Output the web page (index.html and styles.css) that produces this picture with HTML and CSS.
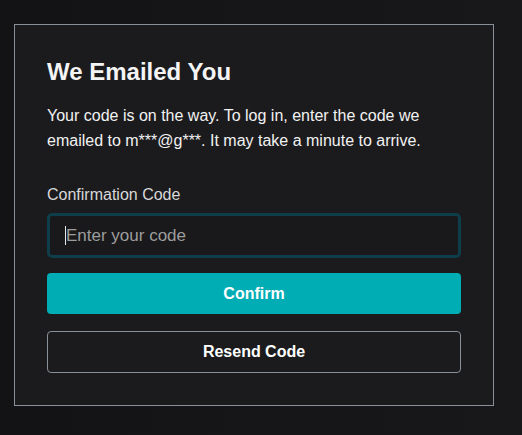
FILE: index.html
```html
<!DOCTYPE html>
<html lang="en">
<head>
<meta charset="utf-8">
<title>We Emailed You</title>
<link rel="stylesheet" href="styles.css">
</head>
<body>
<main class="page">
  <section class="card">
    <h1 class="title">We Emailed You</h1>
    <p class="desc">Your code is on the way. To log in, enter the code we emailed to m***@g***. It may take a minute to arrive.</p>
    <form class="form">
      <label class="label" for="code">Confirmation Code</label>
      <div class="input"><span class="caret"></span><span class="placeholder">Enter your code</span></div>
      <button type="button" class="btn btn-primary">Confirm</button>
      <button type="button" class="btn btn-secondary">Resend Code</button>
    </form>
  </section>
</main>
</body>
</html>
```
FILE: styles.css
```css
html, body {
  margin: 0;
  padding: 0;
}
body {
  background: linear-gradient(90deg, #131315 0%, #18181b 100%);
  font-family: "Liberation Sans", Arial, sans-serif;
  color: #f2f2f2;
  width: 522px;
  height: 435px;
  overflow: hidden;
}
.page {
  padding: 24px 0 0 14px;
}
.card {
  box-sizing: border-box;
  width: 480px;
  height: 382px;
  border: 1px solid #8a9099;
  background: #1b1b1e;
  padding: 32px 32px;
}
.title {
  margin: 0;
  font-size: 24px;
  font-weight: bold;
  line-height: 28px;
  color: #f4f4f4;
  padding-top: 1px;
}
.desc {
  margin: 17px 0 0;
  font-size: 16px;
  line-height: 25px;
  color: #f2f2f2;
}
.form {
  display: flex;
  flex-direction: column;
  margin-top: 30px;
}
.label {
  font-size: 16px;
  line-height: 24px;
  color: #d8d8d8;
}
.input {
  box-sizing: border-box;
  margin-top: 6px;
  height: 45px;
  border: 3px solid #0d3e49;
  border-radius: 5px;
  background: #19191b;
  display: flex;
  align-items: center;
  padding-left: 15px;
}
.caret {
  width: 1px;
  height: 19px;
  background: #e8e8e8;
}
.placeholder {
  font-size: 17px;
  color: #9d9d9d;
}
.btn {
  box-sizing: border-box;
  height: 42px;
  border-radius: 4px;
  font-family: "Liberation Sans", Arial, sans-serif;
  font-size: 16px;
  font-weight: bold;
  color: #ffffff;
  cursor: pointer;
}
.btn-primary {
  margin-top: 15px;
  height: 41px;
  background: #00adb5;
  border: none;
}
.btn-secondary {
  margin-top: 17px;
  background: transparent;
  border: 1px solid #8a9099;
}
```
